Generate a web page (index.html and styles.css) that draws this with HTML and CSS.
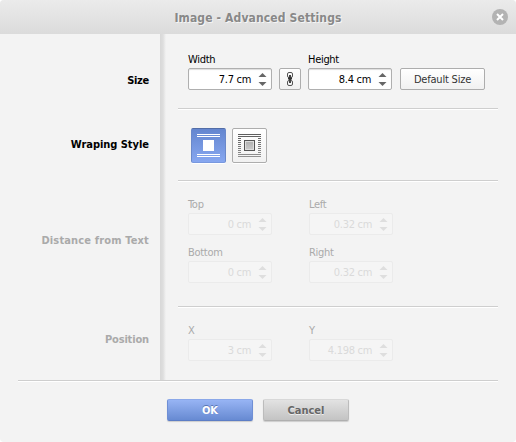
FILE: index.html
```
<!DOCTYPE html>
<html lang="en">
<head>
<meta charset="utf-8">
<title>Image - Advanced Settings</title>
<link rel="stylesheet" href="styles.css">
</head>
<body>
<div class="dialog">
  <header class="header">
    <h1 class="title">Image - Advanced Settings</h1>
    <svg class="close" width="16" height="16" viewBox="0 0 16 16"><circle cx="8" cy="8" r="8" fill="#b3b3b3"/><path d="M5 5l6 6M11 5l-6 6" stroke="#fff" stroke-width="2"/></svg>
  </header>
  <main class="body">
    <section class="row row-size">
      <div class="name"><span class="n-size">Size</span></div>
      <div class="content">
        <div class="fields">
          <div class="field"><label>Width</label><div class="spin"><span class="value">7.7 cm</span><svg class="arrows" width="9" height="13" viewBox="0 0 9 13"><path d="M.5 4L4.5 0l4 4zM.5 9h8l-4 4z"/></svg></div></div>
          <button class="btn link"><svg width="8" height="14" viewBox="0 0 8 14" fill="none" stroke="#555"><rect x="1.5" y=".5" width="5" height="5" rx="1.5"/><rect x="1.5" y="8.500" width="5" height="5" rx="1.5"/><path d="M4 3v8" stroke="#444" stroke-width="2"/><path d="M2 6.500h4" stroke="#333" stroke-width="2"/></svg></button>
          <div class="field"><label>Height</label><div class="spin"><span class="value">8.4 cm</span><svg class="arrows" width="9" height="13" viewBox="0 0 9 13"><path d="M.5 4L4.5 0l4 4zM.5 9h8l-4 4z"/></svg></div></div>
          <button class="btn default"><span>Default Size</span></button>
        </div>
      </div>
    </section>
    <section class="row row-wrap">
      <div class="name"><span class="n-wrap">Wraping Style</span></div>
      <div class="content">
        <div class="styles">
          <button class="style active"><svg width="23" height="23" viewBox="0 0 23 23" fill="#fff" shape-rendering="crispEdges"><path d="M0 0h23v1H0zM0 2h23v1H0zM6 6h11v11H6zM0 20h23v1H0zM0 22h23v1H0z"/></svg></button>
          <button class="style"><svg width="23" height="23" viewBox="0 0 23 23" shape-rendering="crispEdges"><defs><linearGradient id="g" x1="0" y1="0" x2="0" y2="23" gradientUnits="userSpaceOnUse"><stop stop-color="#5c5c5c"/><stop offset="1" stop-color="#929292"/></linearGradient><linearGradient id="f" x1="0" y1="0" x2="0" y2="1"><stop stop-color="#b3b3b3"/><stop offset="1" stop-color="#c8c8c8"/></linearGradient></defs><path fill="url(#g)" d="M0 0h23v1H0zM0 2h23v1H0zM0 4h3v1H0zM0 6h3v1H0zM0 8h3v1H0zM0 10h3v1H0zM0 12h3v1H0zM0 14h3v1H0zM0 16h3v1H0zM0 18h3v1H0zM20 4h3v1h-3zM20 6h3v1h-3zM20 8h3v1h-3zM20 10h3v1h-3zM20 12h3v1h-3zM20 14h3v1h-3zM20 16h3v1h-3zM20 18h3v1h-3zM0 20h23v1H0zM0 22h23v1H0z"/><path fill="#555" d="M6 6h11v11H6z"/><path fill="#ddd" d="M7 7h9v9H7z"/><path fill="url(#f)" d="M8 8h7v7H8z"/></svg></button>
        </div>
      </div>
    </section>
    <section class="row row-distance off">
      <div class="name"><span class="n-distance">Distance from Text</span></div>
      <div class="content">
        <div class="grid">
          <div class="field"><label>Top</label><div class="spin"><span class="value">0 cm</span><svg class="arrows" width="9" height="13" viewBox="0 0 9 13"><path d="M.5 4L4.5 0l4 4zM.5 9h8l-4 4z"/></svg></div></div>
          <div class="field"><label>Left</label><div class="spin"><span class="value">0.32 cm</span><svg class="arrows" width="9" height="13" viewBox="0 0 9 13"><path d="M.5 4L4.5 0l4 4zM.5 9h8l-4 4z"/></svg></div></div>
          <div class="field"><label>Bottom</label><div class="spin"><span class="value">0 cm</span><svg class="arrows" width="9" height="13" viewBox="0 0 9 13"><path d="M.5 4L4.5 0l4 4zM.5 9h8l-4 4z"/></svg></div></div>
          <div class="field"><label>Right</label><div class="spin"><span class="value">0.32 cm</span><svg class="arrows" width="9" height="13" viewBox="0 0 9 13"><path d="M.5 4L4.5 0l4 4zM.5 9h8l-4 4z"/></svg></div></div>
        </div>
      </div>
    </section>
    <section class="row row-position off">
      <div class="name"><span class="n-position">Position</span></div>
      <div class="content">
        <div class="grid">
          <div class="field"><label>X</label><div class="spin"><span class="value">3 cm</span><svg class="arrows" width="9" height="13" viewBox="0 0 9 13"><path d="M.5 4L4.5 0l4 4zM.5 9h8l-4 4z"/></svg></div></div>
          <div class="field"><label>Y</label><div class="spin"><span class="value">4.198 cm</span><svg class="arrows" width="9" height="13" viewBox="0 0 9 13"><path d="M.5 4L4.5 0l4 4zM.5 9h8l-4 4z"/></svg></div></div>
        </div>
      </div>
    </section>
  </main>
  <footer class="footer">
    <button class="action ok"><span>OK</span></button>
    <button class="action cancel"><span>Cancel</span></button>
  </footer>
</div>
</body>
</html>
```
FILE: styles.css
```
* { box-sizing: border-box; }
body { margin: 0; background: #fff; font: 11px/14px "DejaVu Sans Condensed", "DejaVu Sans", sans-serif; font-stretch: condensed; letter-spacing: -0.3px; color: #000; }
button { font: inherit; letter-spacing: inherit; padding: 0; margin: 0; display: flex; align-items: center; justify-content: center; }
button span { padding-top: 2px; }
svg { display: block; }
.dialog { width: 516px; height: 442px; background: #f3f3f3; border-radius: 4px; overflow: hidden; }
.header { height: 34px; padding: 0 8px 0 24px; display: flex; align-items: center; background: linear-gradient(#ebebeb, #dbdbdb); }
.title { flex: 1; margin: 1px 0 0; text-align: center; font-size: 12px; line-height: 16px; letter-spacing: 0.13px; color: #888; text-shadow: 1px 1px #f5f5f5; }
.body { height: 346px; background: linear-gradient(90deg, #d8d8d8, #dedede 50%, #f3f3f3) 160px 0 / 6px 100% no-repeat; }
.row { display: flex; }
.row-size { height: 76px; }
.row-wrap { height: 72px; }
.row-distance { height: 126px; }
.row-position { height: 72px; }
.name { width: 149px; margin-right: 29px; text-align: right; font-weight: bold; white-space: nowrap; }
.n-wrap { letter-spacing: -0.04px; }
.n-distance { letter-spacing: 0.15px; }
.n-position { letter-spacing: -0.15px; }
.row-size .name { padding-top: 40px; }
.row-wrap .name { padding-top: 28px; }
.row-distance .name { padding-top: 52px; }
.row-position .name { padding-top: 25px; }
.content { width: 320px; padding-left: 10px; border-bottom: 1px solid #fff; box-shadow: inset 0 -1px #cecece; }
.row-position .content { border: 0; box-shadow: none; }
.fields { display: flex; align-items: flex-end; padding-top: 18px; }
.row-distance .grid { padding-top: 15px; }
.row-position .grid { padding-top: 15px; }
.grid { display: grid; grid-template-columns: 84px 84px; column-gap: 37px; row-gap: 10px; }
.field { width: 84px; }
.field label { display: block; height: 16px; padding-top: 1px; }
.spin { display: flex; align-items: center; justify-content: flex-end; height: 22px; border: 1px solid #afafaf; border-radius: 2px; background: #fff; box-shadow: inset 0 1px 1px #ddd; padding-right: 4px; }
.value { padding-top: 2px; }
.arrows { margin-left: 7px; fill: #666; }
.btn { height: 22px; border: 1px solid #adadad; border-radius: 2px; background: linear-gradient(#fff, #f1f1f1); color: #333; }
.link { width: 22px; margin: 0 7px; }
.default { width: 85px; margin-left: 8px; letter-spacing: -0.2px; }
.styles { display: flex; gap: 6px; padding: 18px 0 0 3px; }
.style { width: 35px; height: 35px; border: 1px solid #adadad; border-radius: 2px; background: linear-gradient(#fff, #f1f1f1); box-shadow: 0 1px #fff; }
.active { border-color: #526da7 #6b89ca #7898df; background: linear-gradient(#6486cf, #87a7f0); }
.off .name, .off label { color: #aaa; }
.off .spin { border-color: #ebebeb; background: #f5f5f5; box-shadow: none; color: #dadada; }
.off .arrows { fill: #dedede; }
.footer { width: 480px; height: 62px; margin: 0 18px; border-top: 1px solid #cecece; box-shadow: inset 0 1px #fff; display: flex; gap: 10px; padding: 18px 0 0 149px; }
.action { width: 86px; height: 22px; border: 1px solid; border-radius: 2px; font-weight: bold; letter-spacing: 0; box-shadow: 0 1px 1px #ccc; }
.ok { color: #fff; border-color: #8ba8e9 #6f8fd5 #5c7dc5; background: linear-gradient(#97b4f4, #678ad2); text-shadow: 0 -1px #5a77b5; }
.cancel { color: #666; border-color: #d8d8d8 #bcbcbc #afafaf; background: linear-gradient(#e2e2e2, #c3c3c3); text-shadow: 0 1px #eee; }
```
